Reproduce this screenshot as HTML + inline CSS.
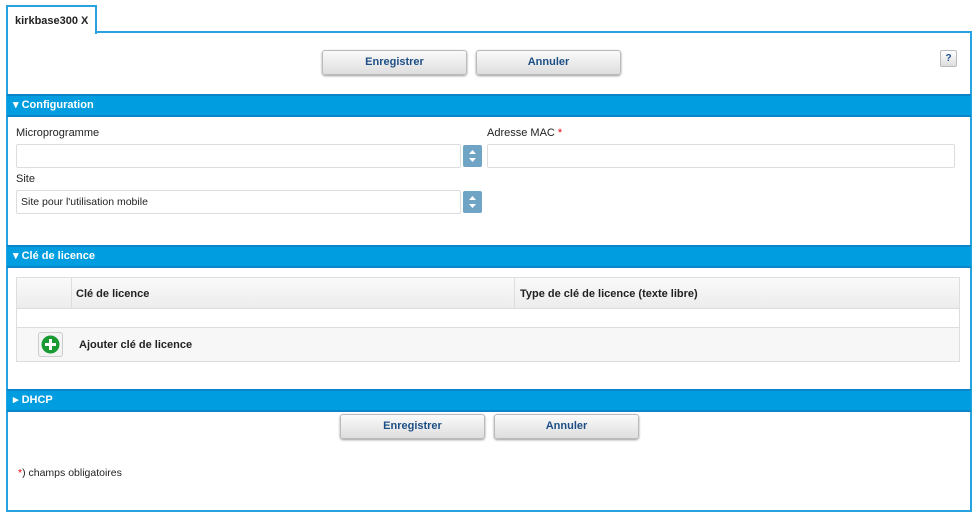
<!DOCTYPE html>
<html><head><meta charset="utf-8"><style>
*{box-sizing:border-box;margin:0;padding:0}
body{width:977px;height:514px;background:#fff;font-family:"Liberation Sans",sans-serif;font-size:11px;color:#222;position:relative;overflow:hidden}
.a{position:absolute}
.btn{position:absolute;height:25px;width:145px;border:1px solid #bbb;border-radius:3px;background:linear-gradient(#fafafa,#dedede);box-shadow:0 1px 2px #999;color:#1d4f86;font-weight:bold;text-align:center;line-height:23px;font-size:11px}
.hdr{position:absolute;left:7px;width:964px;height:23px;background:#009ee0;border-top:2px solid #0a86c8;border-bottom:2px solid #0a86c8;color:#fff;font-weight:bold;font-size:11px;line-height:19px;padding-left:6px}
.inp{position:absolute;height:24px;border:1px solid #ddd;border-radius:2px;background:#fff}
.spin{position:absolute;width:19px;height:22px;background:#6fa4c4;border-radius:2px}
.lbl{position:absolute;font-size:11px}
</style></head><body>
<div class="a" style="left:6px;top:5px;width:91px;height:29px;border:2px solid #29a3e0;border-bottom:none;background:#fff;z-index:2;font-weight:bold;font-size:11px;padding:8px 0 0 7px">kirkbase300 X</div>
<div class="a" style="left:6px;top:31px;width:966px;height:481px;border:2px solid #29a3e0"></div>
<div class="btn" style="left:322px;top:50px">Enregistrer</div>
<div class="btn" style="left:476px;top:50px">Annuler</div>
<div class="a" style="left:940px;top:50px;width:17px;height:17px;border:1px solid #bbb;border-radius:2px;background:linear-gradient(#fff,#ddd);font-weight:bold;font-size:10px;color:#1d4f86;text-align:center;line-height:15px">?</div>
<div class="hdr" style="top:94px">▾ Configuration</div>
<div class="lbl" style="left:16px;top:127px">Microprogramme</div>
<div class="inp" style="left:16px;top:144px;width:445px"></div>
<div class="spin" style="left:463px;top:145px"><svg width="19" height="22"><path d="M6 9l3.5-4 3.5 4zM6 13l3.5 4 3.5-4z" fill="#fff"/></svg></div>
<div class="lbl" style="left:487px;top:127px">Adresse MAC <span style="color:#e00">*</span></div>
<div class="inp" style="left:487px;top:144px;width:468px"></div>
<div class="lbl" style="left:16px;top:173px">Site</div>
<div class="inp" style="left:16px;top:190px;width:445px;padding:5px 0 0 4px;font-size:10.5px">Site pour l'utilisation mobile</div>
<div class="spin" style="left:463px;top:191px"><svg width="19" height="22"><path d="M6 9l3.5-4 3.5 4zM6 13l3.5 4 3.5-4z" fill="#fff"/></svg></div>
<div class="hdr" style="top:245px">▾ Clé de licence</div>
<div class="a" style="left:16px;top:277px;width:944px;height:85px;border:1px solid #ddd">
 <div class="a" style="left:0;top:0;width:942px;height:31px;background:linear-gradient(#fafafa,#ececec);border-bottom:1px solid #ddd"></div>
 <div class="a" style="left:54px;top:0;width:1px;height:31px;background:#ddd"></div>
 <div class="a" style="left:497px;top:0;width:1px;height:31px;background:#ddd"></div>
 <div class="a" style="left:59px;top:10px;font-weight:bold">Clé de licence</div>
 <div class="a" style="left:503px;top:10px;font-weight:bold">Type de clé de licence (texte libre)</div>
 <div class="a" style="left:0;top:49px;width:942px;height:34px;background:#f7f7f7;border-top:1px solid #ddd"></div>
 <div class="a" style="left:21px;top:54px;width:25px;height:25px;border:1px solid #ccc;border-radius:3px;background:#f4f4f4"><svg width="23" height="23"><circle cx="11.5" cy="11.5" r="9" fill="#1a9a33"/><path d="M11.5 6v11M6 11.5h11" stroke="#fff" stroke-width="3"/></svg></div>
 <div class="a" style="left:62px;top:61px;font-weight:bold">Ajouter clé de licence</div>
</div>
<div class="hdr" style="top:389px">▸ DHCP</div>
<div class="btn" style="left:340px;top:414px">Enregistrer</div>
<div class="btn" style="left:494px;top:414px">Annuler</div>
<div class="lbl" style="left:18px;top:467px;font-size:10.5px"><span style="color:#e00">*</span>) champs obligatoires</div>
</body></html>
